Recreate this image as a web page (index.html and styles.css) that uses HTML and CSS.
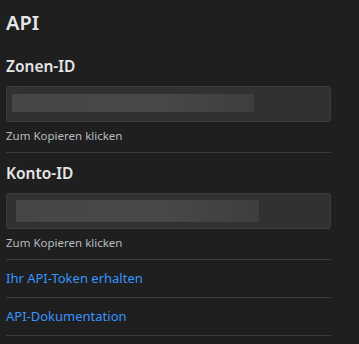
FILE: index.html
```html
<!DOCTYPE html>
<html lang="de">
<head>
    <meta charset="UTF-8">
    <meta name="viewport" content="width=device-width, initial-scale=1.0">
    <title>API</title>
    <link rel="stylesheet" href="styles.css">
</head>
<body>
    <div class="panel">
        <h1 class="panel-title">API</h1>

        <!-- Zone -->
        <div class="field">
            <h2 class="field-label">Zonen-ID</h2>
            <div class="copy-box">
                <span class="blur blur-zone"></span>
            </div>
            <p class="hint">Zum Kopieren klicken</p>
        </div>

        <!-- Account -->
        <div class="field">
            <h2 class="field-label">Konto-ID</h2>
            <div class="copy-box">
                <span class="blur blur-account"></span>
            </div>
            <p class="hint">Zum Kopieren klicken</p>
        </div>

        <a class="link-row" href="#">Ihr API-Token erhalten</a>
        <a class="link-row" href="#">API-Dokumentation</a>
    </div>
</body>
</html>
```

FILE: styles.css
```css
html, body {
    margin: 0;
    height: 100%;
}

body {
    background-color: #1f1f1f;
    color: #e6e6e6;
    font-family: "Noto Sans", "Open Sans", sans-serif;
}

.panel {
    width: 325px;
    padding: 10px 0 0 6px;
}

.panel-title {
    margin: 0 0 10px;
    font-size: 20px;
    line-height: 26px;
    font-weight: 600;
}

/* ID fields */
.field {
    padding: 10px 0 8px;
    border-bottom: 1px solid #3a3a3a;
}

.field-label {
    margin: 0 0 10px;
    font-size: 15.5px;
    line-height: 20px;
    font-weight: 600;
}

.copy-box {
    height: 34px;
    background-color: #313131;
    border: 1px solid #3c3c3c;
    border-radius: 3px;
    cursor: pointer;
}

.blur {
    display: block;
    background: linear-gradient(to right, #454645, #474947 60%, #3d3e3d);
    filter: blur(0.6px);
}

.blur-zone {
    width: 242px;
    height: 18px;
    margin: 7px 0 0 5px;
}

.blur-account {
    width: 243px;
    height: 22px;
    margin: 6px 0 0 9px;
}

.hint {
    margin: 6px 0 0;
    font-size: 11.5px;
    line-height: 16px;
    color: #b8bcc0;
}

/* Links */
.link-row {
    display: block;
    height: 37px;
    line-height: 37px;
    font-size: 13px;
    color: #3794ff;
    text-decoration: none;
    border-bottom: 1px solid #3a3a3a;
}

.link-row:hover {
    text-decoration: underline;
}
```
